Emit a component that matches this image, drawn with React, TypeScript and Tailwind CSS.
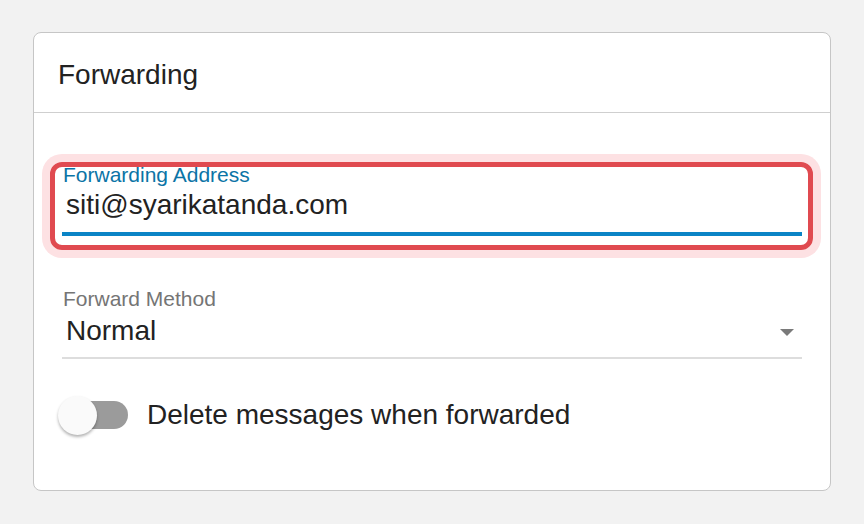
import { useState } from "react";

const ForwardingCard = () => {
  const [address, setAddress] = useState("siti@syarikatanda.com");
  const [deleteOnForward, setDeleteOnForward] = useState(false);

  return (
    <div className="w-[798px] h-[459px] bg-white border border-[#c6c6c6] rounded-[8px]">
      <div className="h-[80px] flex items-center pt-[4px] px-[24px] border-b border-[#cfcfcf]">
        <h2 className="text-[28px] text-[#222222]">Forwarding</h2>
      </div>

      <div className="px-[28px]">
        {/* text field, highlighted */}
        <div className="relative mt-[48px]">
          <label className="block text-[21px] leading-[24px] text-[#0b74a6] pl-[1px] pt-[2px] -mb-[2px]">
            Forwarding Address
          </label>
          <input
            className="block w-full h-[47px] pl-[4px] pt-[4px] pb-[11px] text-[28px] leading-[32px] text-[#222222] outline-none bg-transparent"
            value={address}
            onChange={(e) => setAddress(e.target.value)}
          />
          <div className="h-[4px] bg-[#0a84c6]" />
          <div className="absolute -left-[12px] -right-[11px] top-[1px] -bottom-[14px] border-[5px] border-[#e04a50] rounded-[12px] shadow-[0_0_0_8px_#fde1e3] pointer-events-none" />
        </div>

        {/* select */}
        <div className="mt-[51px]">
          <label className="block text-[21px] leading-[24px] text-[#757575] pl-[1px]">
            Forward Method
          </label>
          <div className="flex items-center justify-between mt-[4px] pb-[10px] border-b-2 border-[#dddddd]">
            <span className="pl-[4px] text-[28px] leading-[32px] text-[#222222]">Normal</span>
            <svg width="14" height="7" viewBox="0 0 14 7" className="mr-[8px] mt-[2px]">
              <path d="M0 0h14L7 7z" fill="#7a7a7a" />
            </svg>
          </div>
        </div>

        {/* switch */}
        <div className="flex items-center h-[40px] mt-[36px]">
          <button
            className="relative -ml-[4px] w-[70px] h-[40px] flex items-center"
            onClick={() => setDeleteOnForward(!deleteOnForward)}
          >
            <span className="absolute left-[10px] right-0 h-[28px] rounded-full bg-[#9b9b9b]" />
            <span className="absolute left-0 w-[39px] h-[39px] rounded-full bg-[#fafafa] shadow-[0_2px_3px_rgba(0,0,0,0.3)]" />
          </button>
          <span className="ml-[19px] text-[28px] text-[#222222]">Delete messages when forwarded</span>
        </div>
      </div>
    </div>
  );
};

export default function App() {
  return (
    <div className="w-[864px] h-[524px] bg-[#f2f2f2] pt-[32px] pl-[33px] font-['Liberation_Sans',Arial,sans-serif]">
      <ForwardingCard />
    </div>
  );
}
